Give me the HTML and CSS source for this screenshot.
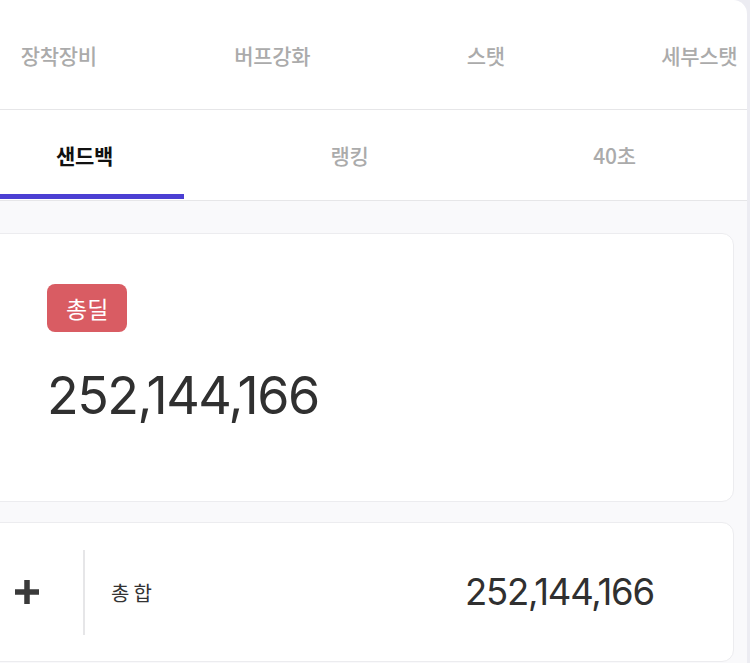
FILE: index.html
```html
<!DOCTYPE html>
<html lang="ko">
<head>
<meta charset="utf-8">
<link rel="stylesheet" href="styles.css">
</head>
<body>
<div class="screen">
  <div class="panel">
    <nav class="tabs tabs-main">
      <div class="tab">장착장비</div>
      <div class="tab">버프강화</div>
      <div class="tab">스탯</div>
      <div class="tab">세부스탯</div>
    </nav>
    <nav class="tabs tabs-sub">
      <div class="tab active"><span class="tab-label">샌드백</span><span class="indicator"></span></div>
      <div class="tab"><span class="tab-label">랭킹</span></div>
      <div class="tab"><span class="tab-label">40초</span></div>
    </nav>
    <section class="content">
      <div class="card total-card">
        <span class="badge">총딜</span>
        <div class="big-number">252,144,166</div>
      </div>
      <div class="card sum-row">
        <span class="plus">
          <svg width="28" height="28" viewBox="0 0 28 28">
            <path d="M14 2v24M2 14h24" stroke="#3a3a3a" stroke-width="5.5" fill="none"/>
          </svg>
        </span>
        <span class="divider"></span>
        <span class="sum-label">총합</span>
        <span class="sum-value">252,144,166</span>
      </div>
    </section>
  </div>
</div>
</body>
</html>
```

FILE: styles.css
```css
body {
  margin: 0;
  font-family: "Noto Sans CJK KR", "Noto Sans", sans-serif;
  background: #ececf2;
}
.screen {
  display: flex;
  width: 750px;
  height: 663px;
  overflow: hidden;
}
.panel {
  flex-shrink: 0;
  width: 795px;
  margin-left: -48px;
  background: #fff;
  border-top-right-radius: 14px;
  overflow: hidden;
  display: flex;
  flex-direction: column;
}
.panel > * {
  flex-shrink: 0;
}
.tabs {
  display: grid;
  border-bottom: 1px solid #e6e6e8;
}
.tabs-main {
  grid-template-columns: repeat(4, 213.5px);
  height: 109px;
}
.tabs-sub {
  grid-template-columns: repeat(3, 265px);
  height: 90px;
}
.tab {
  display: flex;
  flex-direction: column;
  align-items: center;
  justify-content: center;
  font-size: 21px;
  font-weight: 500;
  color: #ababab;
  letter-spacing: -0.3px;
  white-space: nowrap;
}
.tabs-sub .tab {
  justify-content: flex-start;
}
.tab-label {
  margin-top: 30px;
}
.tab.active {
  color: #111;
  font-weight: 700;
}
.indicator {
  align-self: flex-start;
  width: 232px;
  height: 5px;
  margin-top: auto;
  margin-bottom: 1px;
  background: #4b3fd3;
}
.content {
  flex: 1;
  background: #f9f9fb;
  padding: 32px 13px 0 13px;
  display: flex;
  flex-direction: column;
  gap: 20px;
}
.card {
  flex-shrink: 0;
  background: #fff;
  border: 1.5px solid #ececef;
  border-radius: 12px;
}
.total-card {
  box-sizing: border-box;
  height: 269px;
  padding: 50px 0 0 81px;
}
.badge {
  display: inline-block;
  background: #d95c63;
  color: #fff;
  font-size: 23px;
  line-height: 48px;
  padding: 0 19px;
  border-radius: 8px;
}
.big-number {
  margin-top: 33px;
  font-family: Inter, sans-serif;
  font-size: 52px;
  line-height: 1.2;
  letter-spacing: -1.5px;
  color: #303030;
}
.sum-row {
  box-sizing: border-box;
  height: 140px;
  display: flex;
  align-items: center;
}
.plus {
  display: flex;
  margin-left: 47px;
}
.divider {
  width: 2px;
  height: 85px;
  background: #e6e6e8;
  margin-left: 42px;
}
.sum-label {
  margin-left: 26px;
  font-size: 20px;
  letter-spacing: 4px;
  color: #333;
}
.sum-value {
  margin-left: auto;
  margin-right: 79px;
  font-family: Inter, sans-serif;
  font-size: 36.5px;
  letter-spacing: -1.2px;
  color: #303030;
}
```
